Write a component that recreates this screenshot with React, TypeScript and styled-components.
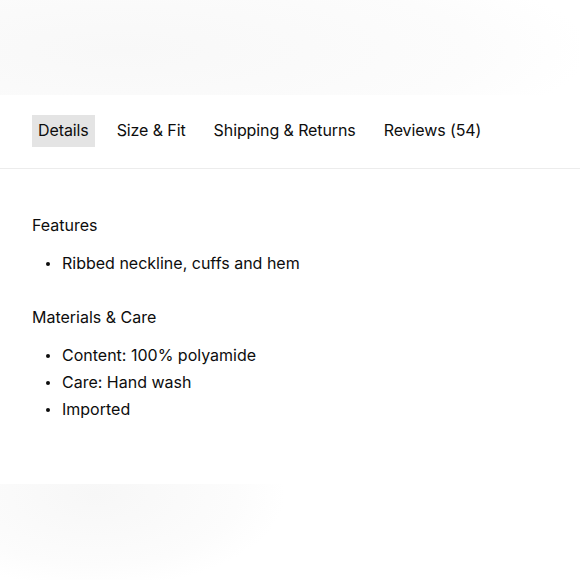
import styled, { createGlobalStyle } from 'styled-components';

const GlobalStyle = createGlobalStyle`
  html, body {
    margin: 0;
    padding: 0;
    background: #ffffff;
  }
  body {
    font-family: Inter, 'Liberation Sans', sans-serif;
    color: #0d0d0d;
  }
`;

const Page = styled.div`
  width: 580px;
  height: 580px;
  overflow: hidden;
  display: flex;
  flex-direction: column;
`;

// faint blurred product image placeholder
const TopHaze = styled.div`
  height: 95px;
  flex-shrink: 0;
  background: radial-gradient(
    ellipse 470px 110px at 120px 50px,
    #f8f8f8 0%,
    #fafafa 40%,
    #fcfcfc 75%,
    #ffffff 100%
  );
`;

const TabBar = styled.div`
  display: flex;
  align-items: center;
  gap: 16px;
  padding: 20px 32px 21px;
  border-bottom: 1px solid #ececec;
`;

const Tab = styled.button<{ $active?: boolean }>`
  border: none;
  margin: 0;
  height: 32px;
  padding: 0 6px 2px;
  font-family: inherit;
  font-size: 16px;
  letter-spacing: -0.1px;
  color: #0d0d0d;
  background: ${(p) => (p.$active ? '#e4e4e4' : 'transparent')};
  cursor: pointer;
`;

const Body = styled.div`
  padding: 44px 32px 0;
  display: flex;
  flex-direction: column;
  gap: 28px;
  flex: 1;
`;

const Section = styled.section`
  display: flex;
  flex-direction: column;
`;

const Heading = styled.h3`
  margin: 0 0 13px;
  font-size: 16px;
  font-weight: 400;
  line-height: 24px;
`;

const List = styled.ul`
  margin: 0;
  padding: 0 0 0 12px;
  list-style: none;
`;

const Item = styled.li`
  display: flex;
  align-items: center;
  gap: 12px;
  font-size: 16px;
  line-height: 27px;
  &::before {
    content: '';
    width: 4px;
    height: 4px;
    border-radius: 50%;
    background: #0d0d0d;
    margin-left: 2px;
  }
`;

const BottomHaze = styled.div`
  height: 96px;
  flex-shrink: 0;
  background: radial-gradient(
    ellipse 190px 95px at 95px 10px,
    #f7f7f7 0%,
    #fafafa 45%,
    #fcfcfc 75%,
    #ffffff 100%
  );
`;

const tabs = ['Details', 'Size & Fit', 'Shipping & Returns', 'Reviews (54)'];

const sections = [
  { title: 'Features', items: ['Ribbed neckline, cuffs and hem'] },
  {
    title: 'Materials & Care',
    items: ['Content: 100% polyamide', 'Care: Hand wash', 'Imported'],
  },
];

const App = () => {
  return (
    <Page>
      <GlobalStyle />
      <TopHaze />
      <TabBar>
        {tabs.map((t, i) => (
          <Tab key={t} $active={i === 0}>
            {t}
          </Tab>
        ))}
      </TabBar>
      <Body>
        {sections.map((s) => (
          <Section key={s.title}>
            <Heading>{s.title}</Heading>
            <List>
              {s.items.map((it) => (
                <Item key={it}>{it}</Item>
              ))}
            </List>
          </Section>
        ))}
      </Body>
      <BottomHaze />
    </Page>
  );
};

export default App;
